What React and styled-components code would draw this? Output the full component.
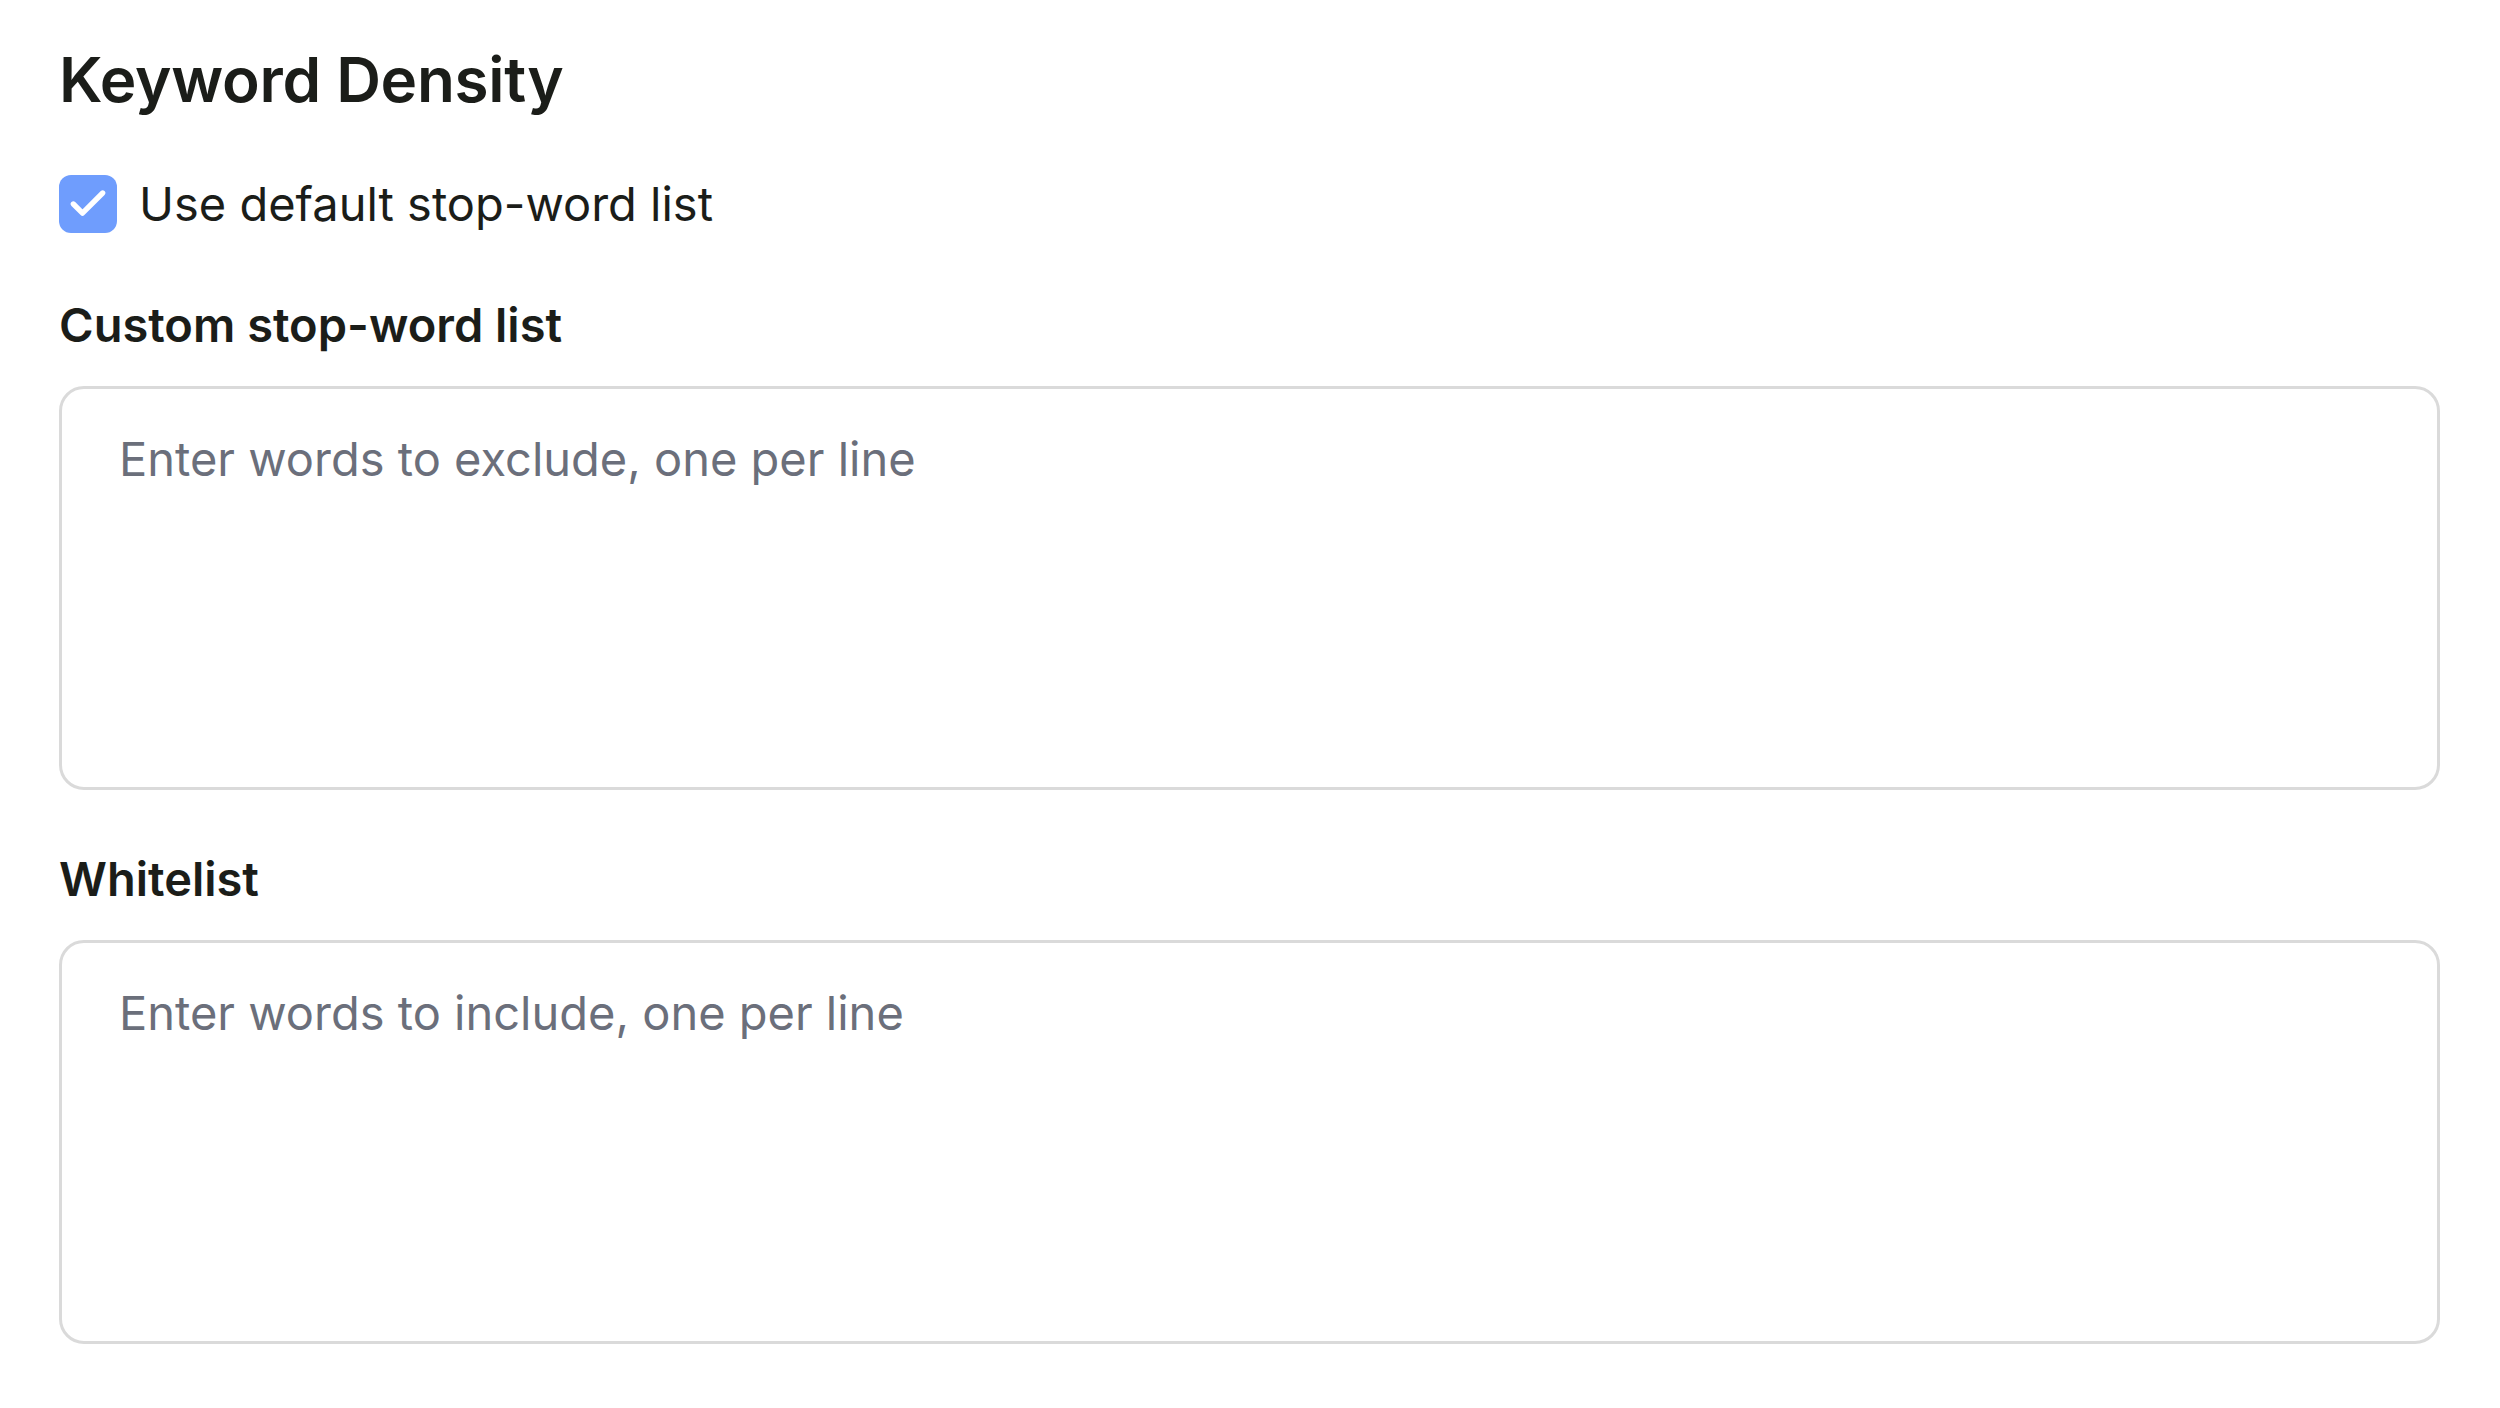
import styled, { createGlobalStyle } from "styled-components"

const GlobalStyle = createGlobalStyle`
    html, body {
        margin: 0;
        padding: 0;
        background: #ffffff;
    }
    * {
        box-sizing: border-box;
    }
`

export default function App() {
    return (
        <>
            <GlobalStyle />
            <Pagina>
                <Titulo>Keyword Density</Titulo>

                <LinhaCheck>
                    <EscondeInput type="checkbox" defaultChecked />
                    <Caixa>
                        <svg width="44" height="44" viewBox="0 0 24 24" fill="none">
                            <path
                                d="M20 6 9 17l-5-5"
                                stroke="#ffffff"
                                strokeWidth="2.9"
                                strokeLinecap="round"
                                strokeLinejoin="round"
                            />
                        </svg>
                    </Caixa>
                    <TextoCheck>Use default stop-word list</TextoCheck>
                </LinhaCheck>

                <Campo $topo={56}>
                    <Rotulo htmlFor="stopwords">Custom stop-word list</Rotulo>
                    <Area id="stopwords" placeholder="Enter words to exclude, one per line" />
                </Campo>

                <Campo $topo={53}>
                    <Rotulo htmlFor="whitelist">Whitelist</Rotulo>
                    <Area id="whitelist" placeholder="Enter words to include, one per line" />
                </Campo>
            </Pagina>
        </>
    )
}

const Pagina = styled.main`
    display: flex;
    flex-direction: column;
    padding: 43px 60px 40px 59px;
    font-family: Inter, "Noto Sans", sans-serif;
    color: #1b1d19;
`

const Titulo = styled.h2`
    margin: 0;
    font-size: 62px;
    line-height: 74px;
    font-weight: 600;
    letter-spacing: -0.3px;
`

const LinhaCheck = styled.label`
    display: flex;
    align-items: center;
    gap: 22px;
    height: 58px;
    margin-top: 58px;
    cursor: pointer;
`

const EscondeInput = styled.input`
    position: absolute;
    opacity: 0;
    width: 0;
    height: 0;
`

const Caixa = styled.span`
    display: flex;
    align-items: center;
    justify-content: center;
    width: 58px;
    height: 58px;
    border-radius: 12px;
    background: #6f9dfd;
    flex-shrink: 0;
`

const TextoCheck = styled.span`
    font-size: 47px;
    line-height: 72px;
    font-weight: 400;
`

const Campo = styled.div`
    display: flex;
    flex-direction: column;
    gap: 25px;
    margin-top: ${props => props.$topo}px;
`

const Rotulo = styled.label`
    font-size: 47px;
    line-height: 72px;
    font-weight: 600;
`

const Area = styled.textarea`
    width: 100%;
    height: 404px;
    padding: 34px 57px;
    border: 3px solid #dadada;
    border-radius: 25px;
    font-family: Inter, "Noto Sans", sans-serif;
    font-size: 47px;
    line-height: 72px;
    color: #1b1d19;
    background: #ffffff;
    resize: none;
    outline: none;

    &::placeholder {
        color: #6b6f7b;
    }
`
